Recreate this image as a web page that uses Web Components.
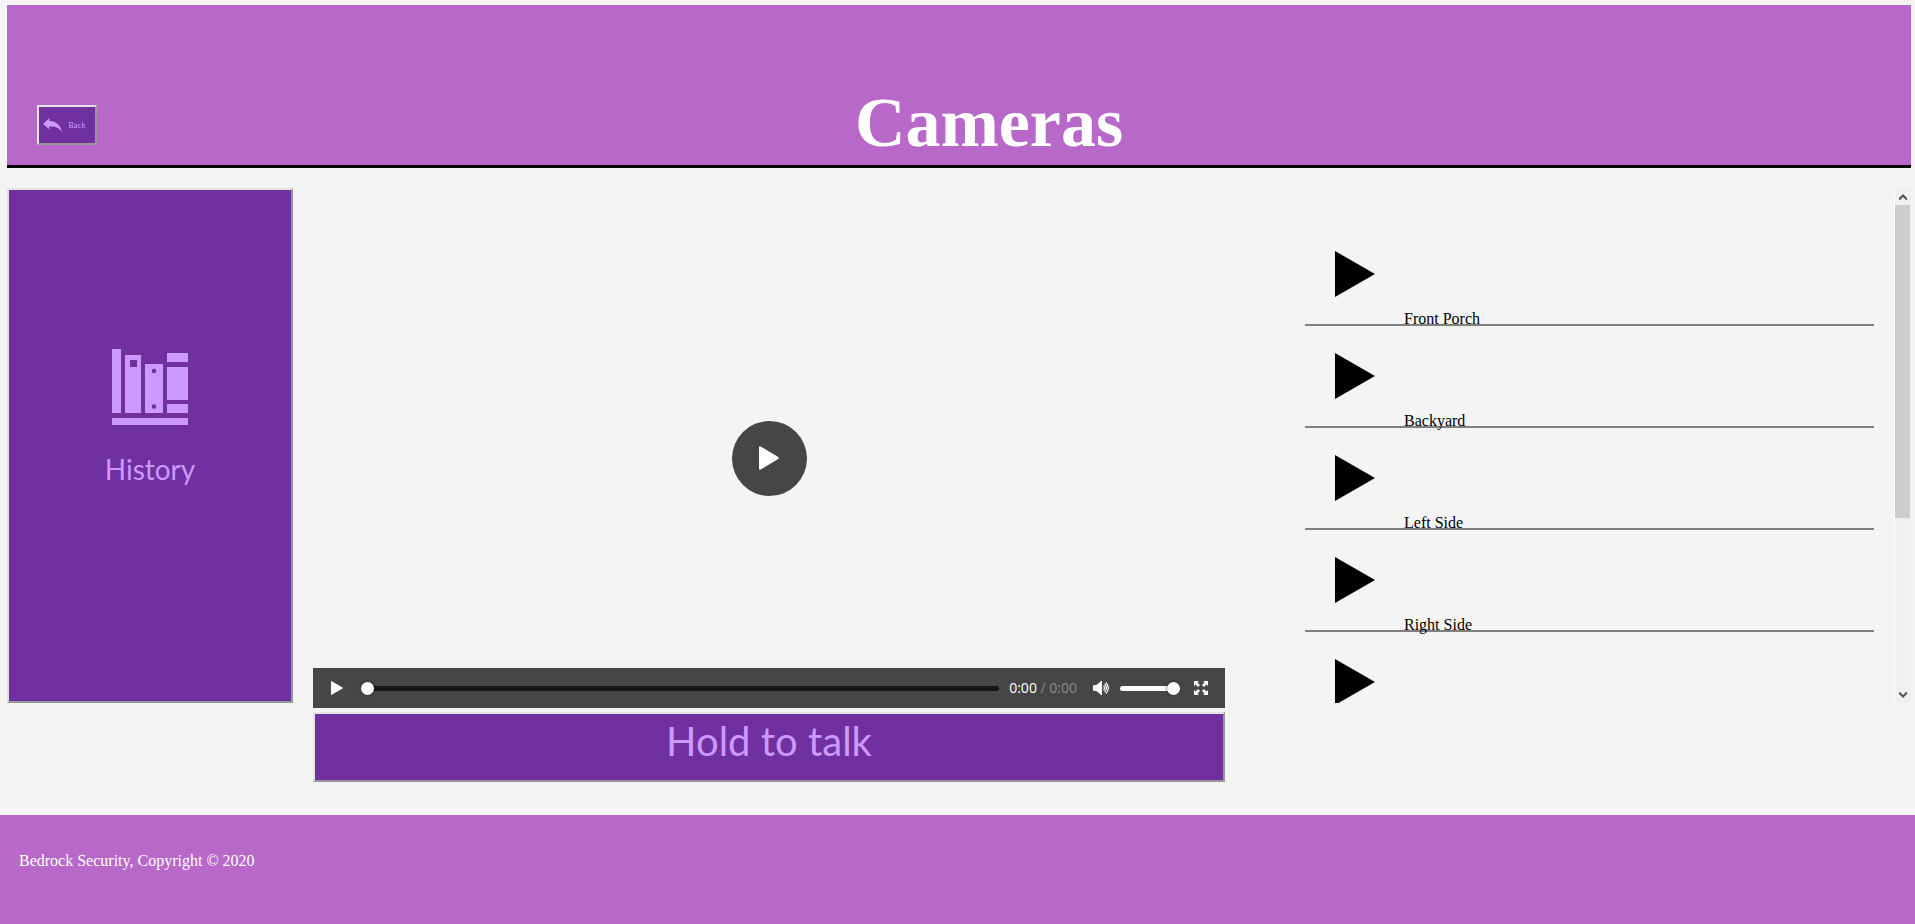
<!DOCTYPE html>
<html lang="en">
<head>
<meta charset="utf-8">
<title>Cameras</title>
<style>
  html { background: #f4f4f4; }
  body { margin: 0; font: 16px/18px "Liberation Serif", serif; color: #000; }
</style>
</head>
<body>
<camera-page></camera-page>
<script>
const define = (name, html, setup) => {
  const template = document.createElement('template');
  template.innerHTML = html;
  customElements.define(name, class extends HTMLElement {
    constructor() {
      super();
      this.attachShadow({ mode: 'open' }).append(template.content.cloneNode(true));
    }
    connectedCallback() { if (setup) setup(this.shadowRoot); }
  });
};

define('purple-button', `
<style>
  :host { display: block; }
  button {
    box-sizing: border-box; width: 100%; height: 100%; margin: 0; padding: var(--inset, 0);
    display: flex; flex-direction: var(--direction, row); align-items: center;
    justify-content: center; gap: var(--gap, 0);
    background: #7030a0; color: #c9f; font: inherit;
    border: 2px solid; border-color: #e3e3e3 #979797 #979797 #e3e3e3;
  }
</style>
<button type="button"><slot></slot></button>`);

define('page-header', `
<style>
  :host {
    display: grid; grid-template-columns: 60px 1fr; align-items: end;
    box-sizing: border-box; height: 163px; margin: 5px 4px 0 7px;
    background: #b768c9; border-bottom: 3px solid #000;
  }
  purple-button {
    width: 60px; height: 40px; margin: 0 0 20px 30px;
    font: 8px/10px Lato, sans-serif; --gap: 7px; --inset: 0 6px 0 0;
  }
  h1 { margin: 0 0 2px; text-align: center; color: #fff; font-size: 70px; line-height: 80px; }
</style>
<purple-button>
  <svg width="19" height="14" viewBox="0 0 19 14" fill="#c9f"><path d="M0 6 6.500 0V3C13 3.200 17.500 7 19 14 16 9.500 12 8 6 8.500L6.500 11.500Z"/></svg>
  <span>Back</span>
</purple-button>
<h1><slot></slot></h1>`);

define('history-panel', `
<style>
  :host { display: block; height: 515px; font: 28px/34px Lato, sans-serif; }
  purple-button { height: 100%; --direction: column; --gap: 27px; --inset: 0 0 57px; }
</style>
<purple-button>
  <svg width="76" height="76" viewBox="0 0 76 76" fill="#c9f">
    <path fill-rule="evenodd" d="M0 0H9V64H0ZM13 6H29V64H13ZM18 11V18H25V11ZM33 15H51V64H33ZM55 4H76V13H55ZM55 18H76V51H55ZM55 55H76V64H55ZM0 69H76V76H0Z"/>
    <circle cx="42" cy="22" r="2.300" fill="#7030a0"/><circle cx="42" cy="57.500" r="2.300" fill="#7030a0"/>
  </svg>
  <span>History</span>
</purple-button>`);

define('video-player', `
<style>
  :host { display: grid; place-items: center; position: relative; height: 500px; }
  button { border: 0; padding: 0; margin: 0; background: none; color: #fff; display: flex; }
  svg { display: block; }
  .big { width: 75px; height: 75px; border-radius: 50%; background: #464646; align-items: center; justify-content: center; }
  .bar {
    position: absolute; left: 0; right: 0; bottom: 0; box-sizing: border-box; height: 40px;
    display: flex; align-items: center; padding: 0 17px 0 18px; background: #464646;
    color: #8c8c8c; font: 14px/20px "Open Sans", sans-serif;
  }
  .time { margin: 0 16px 0 10px; white-space: nowrap; }
  b { font-weight: 400; color: #fff; }
  input { appearance: none; margin: 0; height: 14px; min-width: 0; background: none; }
  input::-webkit-slider-runnable-track { height: 5px; border-radius: 3px; background: var(--track); }
  input::-webkit-slider-thumb {
    appearance: none; width: 13px; height: 13px; margin-top: -4px; border-radius: 50%;
    background: #fff; box-shadow: 0 0 3px #222;
  }
  .seek { flex: 1; margin-left: 18px; --track: #151515; }
  .volume { width: 60px; margin: 0 14px 0 9px; --track: #fff; }
</style>
<button class="big" type="button" aria-label="Play video">
  <svg width="20" height="24" viewBox="0 0 20 24"><path fill="#fff" d="M0 1.500Q0 0 1.600 .4L19.200 11Q20.500 12 19.200 13L1.600 23.600Q0 24 0 22.500Z"/></svg>
</button>
<div class="bar">
  <button type="button" aria-label="Play">
    <svg width="12" height="14" viewBox="0 0 12 14"><path fill="#fff" d="M0 .5Q0 0 .8 .2L11.500 6.500Q12.300 7 11.500 7.500L.8 13.800Q0 14 0 13.500Z"/></svg>
  </button>
  <input class="seek" type="range" min="0" max="100" value="0" aria-label="Seek">
  <span class="time"><b>0:00</b> / 0:00</span>
  <button type="button" aria-label="Mute">
    <svg width="18" height="14" viewBox="0 0 18 14" fill="none" stroke="#fff" stroke-width="1.200"><path fill="#fff" stroke="none" d="M0 4.500 1 4H3.500L8 0H9V14H8L3.500 10H1L0 9.500Z"/><path d="M10.500 5Q12.500 7 10.500 9M11.500 3Q15.300 7 11.500 11M12.800 1.300Q18 7 12.800 12.700"/></svg>
  </button>
  <input class="volume" type="range" min="0" max="100" value="100" aria-label="Volume">
  <button type="button" aria-label="Full screen">
    <svg width="14" height="14" viewBox="0 0 14 14"><path fill="#fff" d="M0 0H5L3.500 1.500 6 4 4 6 1.500 3.500 0 5ZM14 0V5L12.500 3.500 10 6 8 4 10.500 1.500 9 0ZM0 14V9L1.500 10.500 4 8 6 10 3.500 12.500 5 14ZM14 14H9L10.500 12.500 8 10 10 8 12.500 10.500 14 9Z"/></svg>
  </button>
</div>`);

define('camera-item', `
<style>
  :host { display: block; }
  a {
    box-sizing: border-box; height: 102px; display: flex; align-items: flex-end;
    padding-left: 30px; gap: 29px; border-bottom: 2px solid #808080;
    color: inherit; text-decoration: none;
  }
  svg { display: block; margin-bottom: 27px; }
  span { margin-bottom: -4px; }
</style>
<a href="#"><svg width="40" height="46" viewBox="0 0 40 46" aria-hidden="true"><path d="M0 0 40 23 0 46Z"/></svg><span><slot></slot></span></a>`);

define('camera-list', `
<style>
  :host { display: flex; height: 515px; }
  nav {
    box-sizing: border-box; flex: 1; overflow-y: scroll; scrollbar-width: none;
    padding: 36px 20px 44px 60px;
  }
  .scrollbar {
    box-sizing: border-box; width: 17px; display: flex; flex-direction: column;
    background: #f0f0f0; border-left: 1px solid #fff;
  }
  button {
    height: 17px; padding: 0; border: 0; background: none;
    display: flex; align-items: center; justify-content: center;
  }
  .track { flex: 1; padding-right: 1px; overflow: hidden; }
  .thumb { height: 65%; background: #cdcdcd; }
</style>
<nav aria-label="Cameras"><slot></slot></nav>
<div class="scrollbar">
  <button type="button" class="up" aria-label="Scroll up"><svg width="8" height="6" viewBox="0 0 8 6"><path fill="#555" d="M0 4 4 0 8 4V6H7L4 3 1 6H0Z"/></svg></button>
  <div class="track"><div class="thumb"></div></div>
  <button type="button" class="down" aria-label="Scroll down"><svg width="8" height="6" viewBox="0 0 8 6"><path fill="#555" d="M0 2 4 6 8 2V0H7L4 3 1 0H0Z"/></svg></button>
</div>`, root => {
  const nav = root.querySelector('nav');
  const track = root.querySelector('.track');
  const thumb = root.querySelector('.thumb');
  root.querySelector('.up').onclick = () => nav.scrollBy(0, -40);
  root.querySelector('.down').onclick = () => nav.scrollBy(0, 40);
  nav.onscroll = () => {
    const share = nav.scrollTop / (nav.scrollHeight - nav.clientHeight);
    thumb.style.marginTop = Math.round(share * (track.clientHeight - thumb.offsetHeight)) + 'px';
  };
});

define('page-footer', `
<style>
  :host { display: block; flex: 1; background: #b768c9; color: #fff; }
  p { margin: 0; padding: 37px 19px; }
</style>
<p><slot></slot></p>`);

define('camera-page', `
<style>
  :host { display: flex; flex-direction: column; min-height: 100vh; }
  main {
    display: grid; grid-template-columns: 286fr 912fr 666fr; gap: 20px; align-items: start;
    margin: 20px 4px 33px 7px;
  }
  video-player { margin-top: 20px; }
  .talk { height: 70px; margin-top: 4px; font: 40px/48px Lato, sans-serif; }
  .talk span { padding-bottom: 12px; }
</style>
<page-header>Cameras</page-header>
<main>
  <history-panel></history-panel>
  <section>
    <video-player></video-player>
    <purple-button class="talk"><span>Hold to talk</span></purple-button>
  </section>
  <camera-list>
    <camera-item>Front Porch</camera-item>
    <camera-item>Backyard</camera-item>
    <camera-item>Left Side</camera-item>
    <camera-item>Right Side</camera-item>
    <camera-item></camera-item>
    <camera-item></camera-item>
    <camera-item></camera-item>
  </camera-list>
</main>
<page-footer>Bedrock Security, Copyright © 2020</page-footer>`);
</script>
</body>
</html>
